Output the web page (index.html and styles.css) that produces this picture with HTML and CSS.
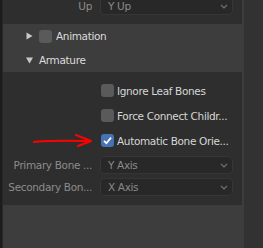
FILE: index.html
```html
<!DOCTYPE html>
<html lang="en">
<head>
    <meta charset="UTF-8">
    <title>FBX Export - Armature</title>
    <link rel="stylesheet" href="styles.css">
</head>
<body>
    <div class="edge"></div>
    <div class="panel">
        <div class="box box-top">
            <div class="prop-row">
                <span class="prop-label">Up</span>
                <div class="select">
                    <span>Y Up</span>
                    <svg class="chev" width="8" height="5" viewBox="0 0 8 5"><path d="M1 1 L4 4 L7 1" fill="none" stroke="#707070" stroke-width="1.2"/></svg>
                </div>
            </div>
        </div>

        <div class="sub-header">
            <svg class="tri" width="7" height="8" viewBox="0 0 7 8"><path d="M0.5 0.5 L6.5 4 L0.5 7.5 Z" fill="#c8c8c8"/></svg>
            <span class="check"></span>
            <span class="sub-title">Animation</span>
        </div>
        <div class="sub-header">
            <svg class="tri" width="7" height="7" viewBox="0 0 7 7"><path d="M0 0.5 L7 0.5 L3.5 6.5 Z" fill="#c8c8c8"/></svg>
            <span class="sub-title">Armature</span>
        </div>

        <div class="box box-content">
            <div class="check-row">
                <span class="check"></span>
                <span class="check-label">Ignore Leaf Bones</span>
            </div>
            <div class="check-row">
                <span class="check"></span>
                <span class="check-label">Force Connect Childr...</span>
            </div>
            <div class="check-row last">
                <span class="check checked">
                    <svg width="13" height="13" viewBox="0 0 13 13"><path d="M3 6.8 L5.4 9.2 L10 3.6" fill="none" stroke="#fff" stroke-width="1.7"/></svg>
                </span>
                <span class="check-label">Automatic Bone Orie...</span>
            </div>
            <div class="prop-row">
                <span class="prop-label">Primary Bone ...</span>
                <div class="select">
                    <span>Y Axis</span>
                    <svg class="chev" width="8" height="5" viewBox="0 0 8 5"><path d="M1 1 L4 4 L7 1" fill="none" stroke="#707070" stroke-width="1.2"/></svg>
                </div>
            </div>
            <div class="prop-row">
                <span class="prop-label">Secondary Bon...</span>
                <div class="select">
                    <span>X Axis</span>
                    <svg class="chev" width="8" height="5" viewBox="0 0 8 5"><path d="M1 1 L4 4 L7 1" fill="none" stroke="#707070" stroke-width="1.2"/></svg>
                </div>
            </div>

            <!-- red annotation arrow -->
            <svg class="arrow" width="62" height="16" viewBox="0 0 62 16">
                <path d="M1 10 C10 8.5 30 8.5 57 9" fill="none" stroke="#ff0000" stroke-width="2" stroke-linecap="round"/>
                <path d="M43 3 L58 9 L45 14" fill="none" stroke="#ff0000" stroke-width="2" stroke-linecap="round" stroke-linejoin="round"/>
            </svg>
        </div>
    </div>
    <div class="viewport"></div>
</body>
</html>
```

FILE: styles.css
```css
html, body {
    height: 100%;
}
body {
    margin: 0;
    display: flex;
    background: #333333;
    font-family: "DejaVu Sans", sans-serif;
    font-size: 10.5px;
    letter-spacing: -0.35px;
    overflow: hidden;
}
.edge {
    width: 2px;
    background: #1c1c1c;
    border-right: 1px solid #282828;
}
.panel {
    width: 239px;
    padding-right: 2px;
    background: #3d3d3d;
    display: flex;
    flex-direction: column;
}
.viewport {
    flex: 1;
    background: #323232;
}
.box {
    background: #2e2e2e;
}
.box-top {
    height: 24px;
    overflow: hidden;
}
.box-top .prop-row {
    margin-top: -3px;
}
.box-content {
    position: relative;
    height: 133px;
    box-sizing: border-box;
    padding-top: 12px;
}
.prop-row {
    display: flex;
    align-items: center;
    height: 18px;
    margin-bottom: 4px;
}
.prop-label {
    width: 89px;
    text-align: right;
    color: #8c8c8c;
    white-space: nowrap;
}
.select {
    margin-left: 8px;
    width: 133px;
    height: 18px;
    box-sizing: border-box;
    background: #282828;
    border: 1px solid #363636;
    border-radius: 4px;
    display: flex;
    align-items: center;
    justify-content: space-between;
    padding: 0 4px 0 7px;
    color: #8a8a8a;
}
.sub-header {
    height: 24px;
    display: flex;
    align-items: center;
    padding-left: 23px;
    color: #dcdcdc;
}
.tri {
    margin-right: 6px;
}
.sub-header .check {
    margin-right: 4px;
}
.check {
    width: 13px;
    height: 13px;
    border-radius: 3px;
    background: #5a5a5a;
    flex-shrink: 0;
    display: flex;
}
.check.checked {
    background: #4772b3;
}
.check-row {
    display: flex;
    align-items: center;
    height: 13px;
    padding-left: 98px;
    margin-bottom: 12px;
}
.check-row.last {
    margin-bottom: 9px;
}
.check-label {
    margin-left: 3px;
    color: #d6d6d6;
    white-space: nowrap;
}
.arrow {
    position: absolute;
    left: 30px;
    top: 60px;
}
```
